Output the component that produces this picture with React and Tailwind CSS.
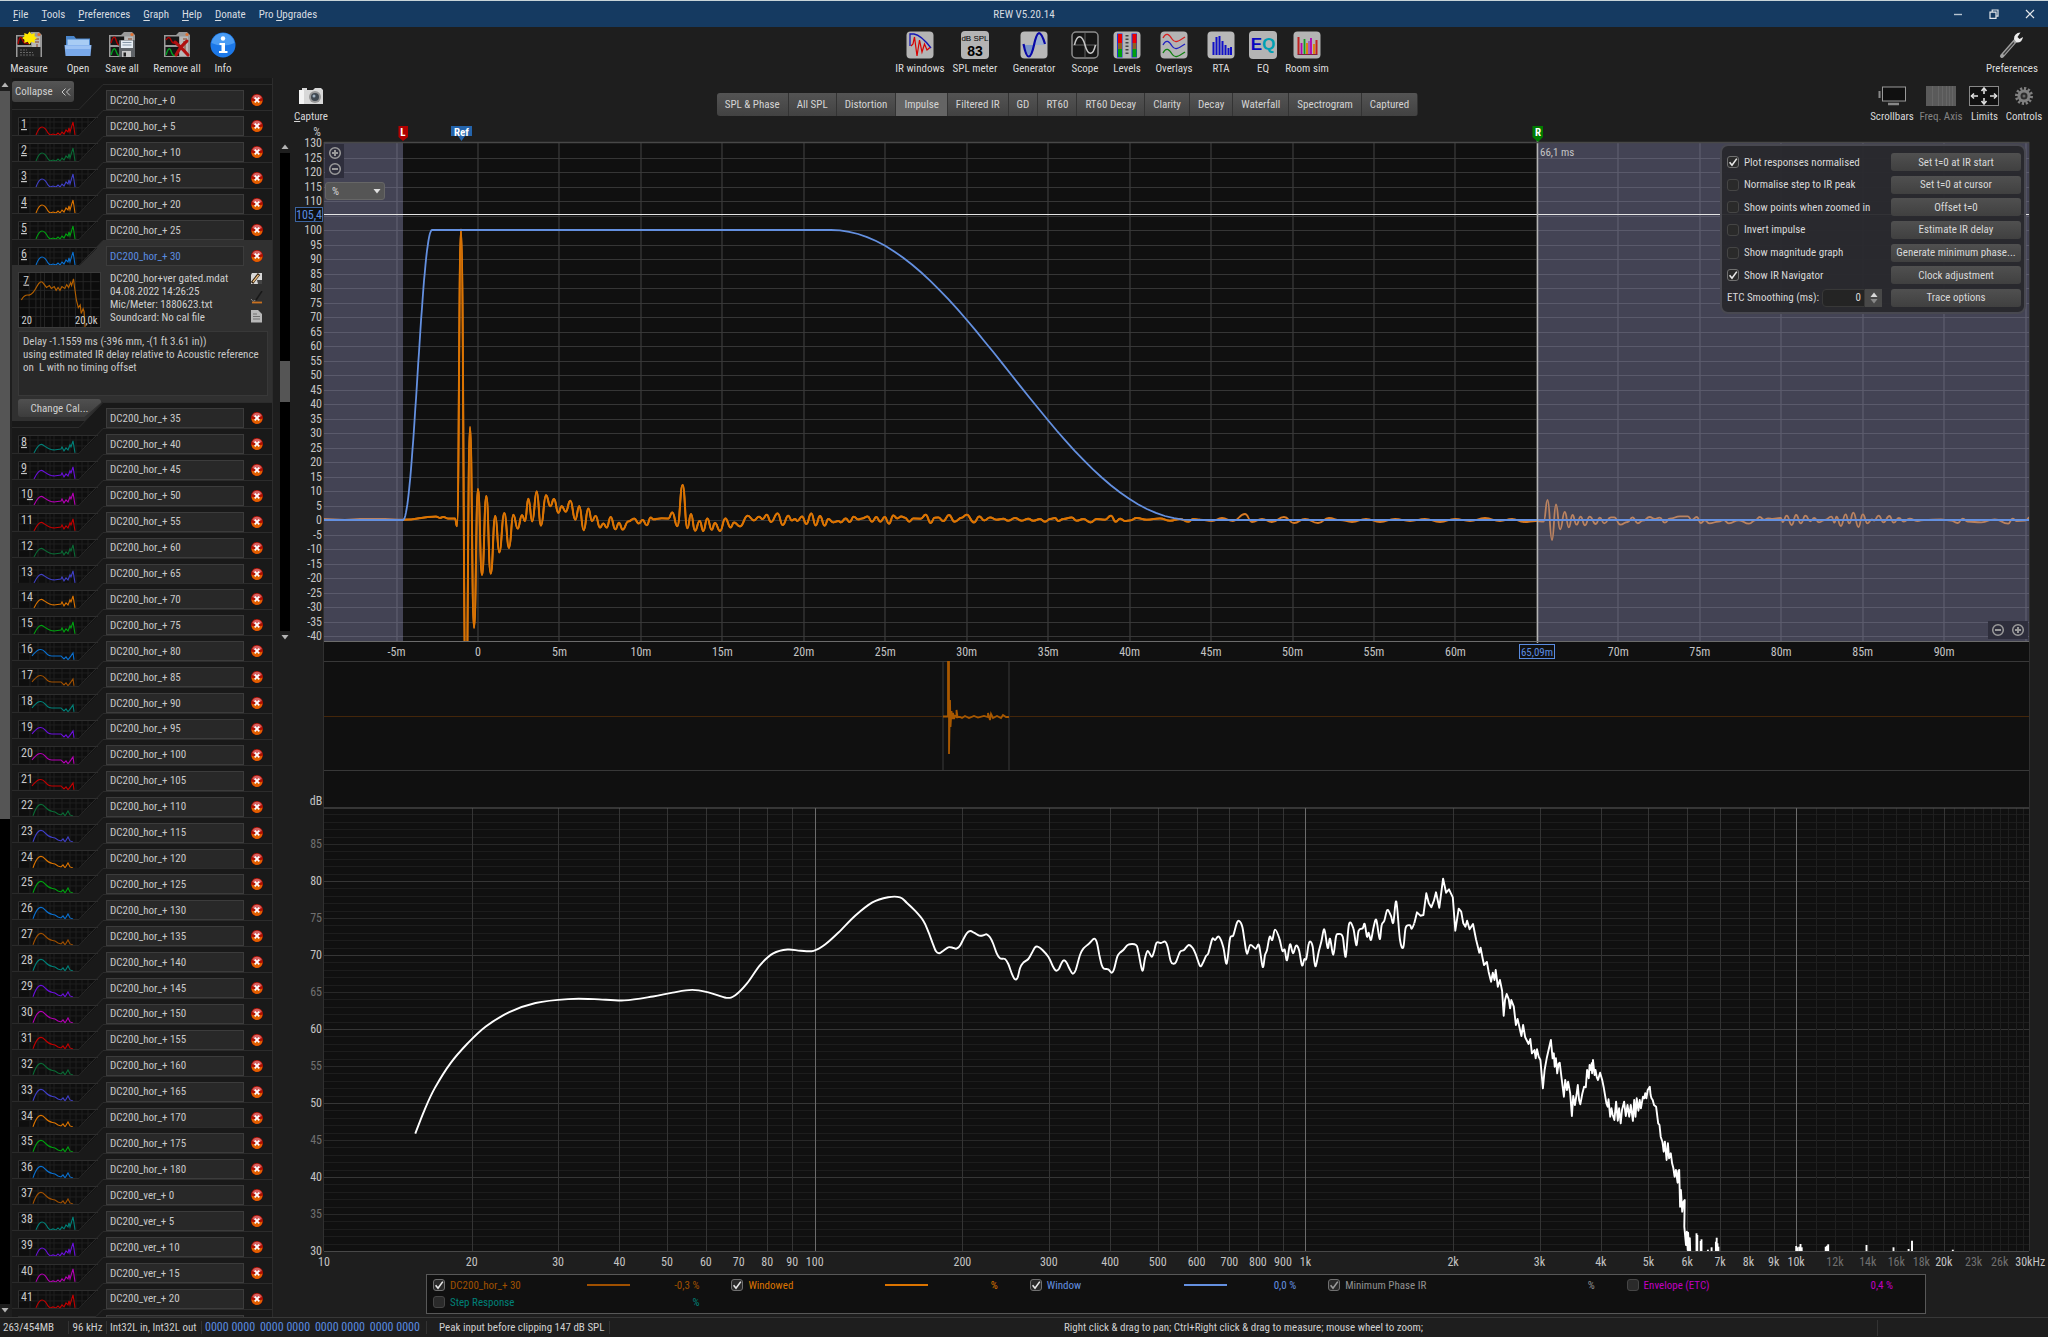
import { useState } from "react";
import clsx from "clsx";

const TRACE_COLORS = [
    "#c40000",
    "#0a6b35",
    "#4040c8",
    "#dc7400",
    "#00a010",
    "#0a70d0",
    "#a05000",
    "#008078",
    "#6a10dc",
    "#b400b4",
];

const horizontal = Array.from({ length: 37 }, (_, i) => `DC200_hor_+ ${i * 5}`);
const vertical = Array.from({ length: 6 }, (_, i) => `DC200_ver_+ ${i * 5}`);
const MEASUREMENTS = [...horizontal, ...vertical];
const SELECTED = 6;

const MENUS = [
    ["", "F", "ile"],
    ["", "T", "ools"],
    ["", "P", "references"],
    ["", "G", "raph"],
    ["", "H", "elp"],
    ["", "D", "onate"],
    ["Pro ", "U", "pgrades"],
];

const GRAPH_TABS = [
    "SPL & Phase",
    "All SPL",
    "Distortion",
    "Impulse",
    "Filtered IR",
    "GD",
    "RT60",
    "RT60 Decay",
    "Clarity",
    "Decay",
    "Waterfall",
    "Spectrogram",
    "Captured",
];

/* ---------- curves ---------- */

// peaks of the impulse response
const IMPULSE_HEAD = [
    [309, 1161], [408, 1152], [420, 1156], [430, 1153], [445, 1158], [465, 1158], [471, 1180], [483, 318],
    [498, 1700], [510, 892], [522, 1475], [534, 1072], [546, 1322], [559, 1092], [572, 1318], [586, 1150],
    [598, 1256], [613, 1142], [627, 1243], [640, 1147], [653, 1187], [666, 1148], [675, 1165], [685, 1100],
    [697, 1166], [710, 1079], [723, 1178], [738, 1090], [751, 1122], [762, 1101], [775, 1141], [785, 1122],
    [797, 1138], [811, 1106], [826, 1161], [838, 1122], [851, 1192], [865, 1129], [876, 1165], [887, 1150],
    [900, 1184], [910, 1172], [920, 1184], [932, 1153], [946, 1189], [957, 1170], [968, 1190], [985, 1166],
    [1003, 1158], [1016, 1172], [1028, 1162], [1040, 1177], [1052, 1155], [1060, 1160], [1085, 1157],
    [1105, 1158], [1117, 1140], [1132, 1180], [1148, 1060], [1162, 1186], [1173, 1145], [1185, 1193],
    [1199, 1165],
].map(([x, y]) => [x / 3 + 300, 520 - (1162 - y) / 2.904]);

const IMPULSE_BODY = [
    [10, 214], [22, 176], [35, 210], [45, 190], [60, 214], [76, 176], [92, 203], [102, 188], [120, 200],
    [143, 168], [162, 182], [177, 171], [188, 178], [200, 165], [213, 187], [233, 161], [248, 196], [265, 168],
    [275, 182], [285, 178], [292, 184], [306, 170], [319, 193], [334, 161], [347, 197], [360, 169], [374, 198],
    [385, 178], [400, 188], [415, 184], [422, 188], [437, 176], [449, 187], [461, 171], [475, 179], [487, 176],
    [503, 170], [516, 186], [529, 172], [541, 186], [554, 172], [567, 192], [580, 167], [592, 176], [604, 170],
    [615, 174], [628, 186], [640, 176], [662, 177], [677, 165], [692, 190], [704, 174], [715, 173], [730, 184],
    [747, 166], [764, 186], [785, 174], [800, 165], [822, 188], [838, 170], [853, 182], [870, 173], [890, 180],
    [910, 177], [925, 183], [945, 175], [965, 183], [985, 177], [1000, 183], [1020, 178], [1035, 186],
    [1050, 178], [1065, 175], [1075, 184], [1090, 178], [1115, 173], [1130, 183], [1150, 178], [1172, 188],
    [1190, 178], [1215, 180], [1233, 168], [1247, 186], [1260, 177], [1275, 184], [1290, 182], [1310, 175],
    [1340, 180], [1380, 176], [1410, 183], [1440, 178], [1465, 186], [1480, 178], [1500, 180],
].map(([x, y]) => [x / 3 + 700, y / 3 + 459.7]);

const IMPULSE_REST = [
    [1212, 521], [1222, 518], [1233, 521], [1245, 514], [1252, 522], [1262, 519], [1272, 522], [1284, 517],
    [1294, 523], [1305, 519], [1318, 523], [1329, 518], [1340, 520], [1352, 522], [1366, 519], [1380, 522],
    [1395, 519], [1410, 521], [1425, 519], [1440, 522], [1455, 519], [1470, 521], [1485, 518], [1500, 521],
    [1512, 519], [1524, 522], [1536, 521],
];

const IMPULSE_TAIL = [
    [70, 125], [82, 60], [95, 180], [107, 73], [119, 148], [133, 96], [145, 142], [156, 105], [168, 134],
    [180, 110], [193, 136], [207, 110], [225, 132], [237, 113], [250, 130], [270, 112], [280, 112], [298, 134],
    [320, 126], [334, 112], [350, 130], [365, 122], [385, 111], [400, 117], [415, 113], [430, 128], [445, 116],
    [475, 109], [498, 109], [510, 120], [525, 111], [537, 129], [549, 121], [562, 130], [590, 125], [605, 120],
    [620, 130], [650, 121], [680, 131], [700, 120], [712, 111], [725, 119], [737, 115], [750, 117], [775, 114],
    [780, 126], [792, 107], [807, 135], [820, 105], [834, 130], [848, 107], [862, 124], [874, 114], [888, 127],
    [905, 120], [925, 110], [934, 128], [940, 110], [953, 138], [967, 103], [978, 130], [990, 98], [1005, 141],
    [1018, 103], [1032, 130], [1045, 118], [1052, 122], [1065, 107], [1080, 127], [1097, 108], [1110, 128],
    [1125, 114], [1140, 125], [1157, 116], [1180, 123], [1200, 120], [1250, 118], [1280, 122], [1300, 129],
    [1315, 116], [1330, 125], [1370, 127], [1410, 118], [1450, 131], [1463, 116], [1475, 123], [1500, 122],
    [1515, 112],
].map(([x, y]) => [x / 2.97 + 1520, y / 3 + 480]);

const LOW_BAND = [
    [318, 868], [325, 850], [333, 833], [345, 814], [358, 799], [372, 786], [390, 775], [410, 768], [435, 765],
    [455, 765], [478, 766], [500, 763], [515, 760], [530, 758], [543, 760], [556, 764], [563, 762], [572, 753],
    [582, 739], [592, 730], [603, 727], [613, 728], [623, 728], [632, 723], [642, 714], [655, 701], [668, 691],
    [680, 687],
].map(([x, y]) => [x * 1.306, y * 1.306]);

const MID_BAND = [
    [0, 112], [20, 128], [45, 152], [70, 182], [85, 215], [98, 250], [108, 274], [118, 280], [130, 272],
    [145, 262], [158, 263], [168, 266], [178, 260], [190, 238], [200, 220], [211, 213], [222, 218], [238, 227],
    [250, 226], [260, 223], [270, 232], [280, 252], [290, 280], [300, 295], [315, 297], [325, 312], [335, 340],
    [345, 358], [353, 352], [360, 325], [370, 308], [385, 297], [395, 280], [405, 262], [413, 260], [425, 268],
    [445, 290], [458, 318], [468, 332], [477, 326], [485, 308], [492, 301], [500, 308], [508, 325], [518, 341],
    [527, 330], [540, 285], [550, 266], [568, 250], [582, 236], [590, 246], [598, 285], [605, 315], [612, 326],
    [625, 328], [635, 338], [642, 328], [652, 290], [660, 278], [670, 270], [685, 254], [708, 255], [715, 275],
    [727, 332], [735, 295], [743, 273], [755, 290], [762, 275], [770, 248], [783, 249], [796, 245], [803, 262],
    [812, 303], [820, 311], [828, 306], [840, 276], [852, 270], [866, 255], [878, 264], [888, 285], [900, 318],
    [908, 310], [918, 288], [925, 280], [937, 237], [945, 240], [957, 230], [970, 262], [980, 311], [990, 236],
    [1000, 226], [1010, 190], [1018, 183], [1027, 200], [1034, 245], [1041, 281], [1051, 255], [1067, 266],
    [1077, 256], [1088, 321], [1095, 285], [1101, 270], [1109, 230], [1117, 240], [1125, 209], [1138, 235],
    [1147, 272], [1154, 269], [1161, 301], [1170, 253], [1179, 280], [1188, 257], [1197, 270], [1206, 316],
    [1213, 298], [1219, 296], [1226, 252], [1232, 245], [1238, 260], [1246, 319], [1256, 275], [1264, 245],
    [1273, 208], [1283, 264], [1290, 236], [1300, 284], [1308, 230], [1315, 222], [1328, 230], [1337, 290],
    [1347, 193], [1360, 205], [1369, 256], [1376, 212], [1388, 205], [1394, 192], [1401, 230], [1406, 218],
    [1413, 240], [1421, 200], [1429, 180], [1439, 237], [1445, 195], [1453, 182], [1462, 150], [1473, 168],
    [1480, 188], [1489, 125], [1500, 240], [1510, 262], [1517, 203], [1530, 196], [1535, 206], [1543, 190],
].map(([x, y]) => [x / 3 + 900, y / 3 + 860]);

const HIGH_BAND = [
    [88, 217], [96, 227], [103, 225], [110, 160], [116, 190], [122, 202], [128, 182], [133, 157], [141, 203],
    [150, 116], [157, 158], [164, 148], [173, 172], [179, 272], [187, 206], [193, 215], [198, 250], [203, 260],
    [207, 242], [213, 268], [221, 252], [228, 298], [236, 338], [239, 323], [243, 350], [247, 375], [254, 366],
    [258, 395], [264, 425], [268, 398], [272, 420], [275, 390], [280, 440], [285, 420], [290, 452], [294, 527],
    [297, 480], [301, 462], [306, 478], [309, 505], [312, 480], [318, 500], [323, 555], [327, 537], [336, 588],
    [340, 555], [345, 592], [353, 612], [357, 597], [361, 640], [367, 630], [370, 655], [373, 628], [377, 650],
    [381, 660], [387, 745], [391, 690], [396, 655], [402, 622], [406, 600], [410, 655], [413, 640], [415, 680],
    [418, 655], [421, 700], [424, 672], [427, 668], [431, 710], [437, 770], [440, 720], [444, 750], [447, 725],
    [452, 760], [456, 828], [459, 768], [463, 795], [467, 765], [470, 735], [473, 780], [476, 793], [481, 760],
    [485, 740], [489, 742], [492, 690], [496, 715], [498, 675], [501, 690], [503, 670], [504, 700], [506, 660],
    [510, 705], [512, 690], [515, 712], [518, 720], [523, 698], [528, 720], [532, 745], [538, 790], [541, 800],
    [543, 778], [547, 830], [550, 805], [553, 825], [557, 840], [561, 785], [565, 842], [568, 805], [572, 850],
    [575, 810], [580, 785], [584, 828], [588, 795], [592, 830], [596, 795], [601, 843], [604, 780], [607, 830],
    [610, 775], [614, 812], [617, 780], [620, 805], [625, 770], [628, 775], [630, 760], [633, 775], [636, 750],
    [641, 740], [643, 765], [645, 775], [648, 780], [651, 795], [656, 800], [661, 850], [664, 855], [667, 890],
    [671, 905], [674, 935], [677, 905], [681, 960], [684, 910], [687, 955], [691, 940], [694, 970], [697, 985],
    [700, 1010], [703, 990], [707, 1028], [709, 992], [711, 990], [713, 1100], [715, 1050], [718, 1115],
    [721, 1085], [724, 1080], [723, 1160], [727, 1215], [729, 1175], [731, 1230], [732, 1178], [734, 1230],
    [736, 1195], [737, 1233],
].map(([x, y]) => [x / 2.376 + 1380, y / 3 + 840]);

// isolated spikes that rise above the 30 dB floor
const FLOOR_SPIKES = [
    [752, 1180], [754, 1185], [762, 1203], [764, 1198], [779, 1229], [788, 1222], [798, 1205], [800, 1193],
    [802, 1210], [804, 1220], [989, 1218], [992, 1222], [996, 1220], [999, 1212], [1002, 1222], [1059, 1220],
    [1062, 1217], [1065, 1213], [1156, 1215], [1220, 1222], [1256, 1227], [1264, 1202], [1361, 1229],
].map(([x, y]) => [x / 2.376 + 1380, y / 3 + 840]);

const r = (n) => Math.round(n * 10) / 10;

const linePath = (pts) => "M" + pts.map(([x, y]) => `${r(x)} ${r(y)}`).join("L");

// every point is a local extreme, so both handles stay horizontal
const peakPath = (pts) =>
    pts.reduce((d, [x, y], i) => {
        if (i === 0) return `M${r(x)} ${r(y)}`;
        const [px, py] = pts[i - 1];
        const mid = r((px + x) / 2);
        return `${d}C${mid} ${r(py)} ${mid} ${r(y)} ${r(x)} ${r(y)}`;
    }, "");

// Catmull-Rom through the points
const smoothPath = (pts) =>
    pts.reduce((d, [x, y], i) => {
        if (i === 0) return `M${r(x)} ${r(y)}`;
        const p0 = pts[i - 2] || pts[i - 1];
        const p1 = pts[i - 1];
        const p3 = pts[i + 1] || pts[i];
        return `${d}C${r(p1[0] + (x - p0[0]) / 6)} ${r(p1[1] + (y - p0[1]) / 6)} ${r(x - (p3[0] - p1[0]) / 6)} ${r(
            y - (p3[1] - p1[1]) / 6
        )} ${r(x)} ${r(y)}`;
    }, "");

const cosineRamp = (x0, y0, x1, y1) =>
    Array.from({ length: 41 }, (_, i) => {
        const k = i / 40;
        return [x0 + (x1 - x0) * k, y0 + ((y1 - y0) * (1 - Math.cos(Math.PI * k))) / 2];
    });

const WINDOW_PATH = linePath([[324, 520], ...cosineRamp(403, 520, 432, 230), ...cosineRamp(831, 230, 1192, 520), [2029, 520]]);
const WINDOWED_PATH = peakPath([...IMPULSE_HEAD, ...IMPULSE_BODY]);
const RAW_PATH = peakPath([[324, 519], [345, 520], [360, 519], [385, 519], ...IMPULSE_HEAD, ...IMPULSE_BODY, ...IMPULSE_REST, ...IMPULSE_TAIL]);

/* ---------- small pieces ---------- */

function RemoveIcon() {
    return (
        <svg viewBox="0 0 14 14" className="h-3.5 w-3.5">
            <circle cx="7" cy="7" r="6" fill="#b01000" />
            <path d="M1.6 7.5A5.4 5.4 0 0 0 12.4 7.5Q7 10 1.6 7.5Z" fill="#e06000" />
            <path d="M2.2 5A5.2 5.2 0 0 1 11.8 5Q7 7.4 2.2 5Z" fill="#d86060" />
            <path d="M4.7 4.7 9.3 9.3M9.3 4.7 4.7 9.3" stroke="#fff" strokeWidth="1.8" />
        </svg>
    );
}

function Triangle({ down, className }) {
    return (
        <svg viewBox="0 0 8 5" className={clsx("h-[5px] w-2", className)}>
            <path d={down ? "M0.5 0H7.5L4 4.5Z" : "M0.5 5H7.5L4 0.5Z"} fill="currentColor" />
        </svg>
    );
}

function CheckBox({ id, checked, onChange, dim }) {
    return (
        <span className="relative h-3 w-3 shrink-0">
            <input
                id={id}
                type="checkbox"
                checked={checked}
                onChange={onChange}
                className="peer block h-3 w-3 appearance-none rounded-[3px] border border-[#454545] bg-[#2a2a2a] checked:border-[#707070]"
            />
            <svg
                viewBox="0 0 12 12"
                className={clsx("pointer-events-none absolute inset-0 hidden h-3 w-3 peer-checked:block", dim ? "opacity-60" : "")}
            >
                <path d="M2.6 6.2 5 9.2 9.8 2.6" fill="none" stroke="#e8e8e8" strokeWidth="1.6" />
            </svg>
        </span>
    );
}

function Scrollbar({ top, thumb, bottom, label }) {
    return (
        <div role="scrollbar" aria-label={label} aria-controls="measurements" aria-valuenow={0} className="flex h-full w-2.5 flex-col items-center text-[#b4b4b4]">
            <Triangle className="my-1 shrink-0" />
            <div className="flex w-full flex-1 flex-col bg-black">
                <div className={top} />
                <div className={clsx("bg-[#555]", thumb)} />
                <div className={bottom} />
            </div>
            <Triangle down className="my-1 shrink-0" />
        </div>
    );
}

/* ---------- header ---------- */

function TitleBar() {
    return (
        <header className="grid h-[27px] shrink-0 grid-cols-3 items-center border-t border-[#c8d4d8] bg-[#153a61] text-[#d8dde2]">
            <nav className="flex gap-[13px] whitespace-nowrap pl-[13px]">
                {MENUS.map(([before, key, after]) => (
                    <a key={after} href="#" className="hover:text-white">
                        {before}
                        <span className="underline underline-offset-2">{key}</span>
                        {after}
                    </a>
                ))}
            </nav>
            <h1 className="text-center">REW V5.20.14</h1>
            <div className="flex items-center justify-end gap-6 pr-3">
                <button type="button" aria-label="Minimise">
                    <svg viewBox="0 0 12 12" className="h-3 w-3">
                        <path d="M2 6.5H10" stroke="#b8c4d0" strokeWidth="1.4" />
                    </svg>
                </button>
                <button type="button" aria-label="Restore">
                    <svg viewBox="0 0 12 12" className="h-3 w-3" fill="none" stroke="#e4e8ec" strokeWidth="1.2">
                        <path d="M2 4.2H8V10.4H2Z" />
                        <path d="M4.2 4V2H10V8.2H8.2" />
                    </svg>
                </button>
                <button type="button" aria-label="Close">
                    <svg viewBox="0 0 12 12" className="h-3 w-3">
                        <path d="M2 2 10 10M10 2 2 10" stroke="#e4e8ec" strokeWidth="1.2" />
                    </svg>
                </button>
            </div>
        </header>
    );
}

function Device() {
    return (
        <g>
            <path d="M1 4V26H27V4L24 1H16L13 4Z" fill="#9a9a9a" />
            <path d="M2.5 5.5H16V14H2.5Z" fill="#161616" />
            <path d="M17 5.5H25V25H17Z" fill="#b8b8b8" />
            <circle cx="24" cy="3.5" r="1.6" fill="#e07030" />
            <path d="M20 8H24M20 11H24M22 13V22" stroke="#884020" strokeWidth="1" />
        </g>
    );
}

const TOOL_ICONS = {
    measure: (
        <>
            <Device />
            <path d="M3 13Q5 3 7 8T11 12L14 13" fill="none" stroke="#b00000" strokeWidth="1.3" />
            <path d="M2.5 16H25.5V26H2.5Z" fill="#222" />
            <path d="M5 19H12M5 21.5H18M5 24H20" stroke="#777" strokeWidth=".8" strokeDasharray="2 1" />
            <path
                d="M14.5 .5 16.4 3.2 19.7 2 19.6 5.3 22 7 19.6 8.7 19.7 12 16.4 10.8 14.5 13.5 12.6 10.8 9.3 12 9.4 8.7 7 7 9.4 5.3 9.3 2 12.6 3.2Z"
                fill="#ffe800"
            />
        </>
    ),
    open: (
        <>
            <path d="M2 5H10L12 7.5H26V16H2Z" fill="#4a86cc" />
            <path d="M3.5 8.5H25V14H3.5Z" fill="#a8ccf4" />
            <path d="M.5 14H27.5L26.5 25H1.5Z" fill="#79a9ea" />
            <path d="M1 14.5H27L26.6 18H1.4Z" fill="#9cc2f4" />
        </>
    ),
    save: (
        <>
            <Device />
            <path d="M2.5 16H16V25H2.5Z" fill="#161616" />
            <path d="M3 12Q6 2 8 9T12 13" fill="none" stroke="#b00000" strokeWidth="1.4" />
            <path d="M3 24Q6 14 8 20T12 24" fill="none" stroke="#00a020" strokeWidth="1.4" />
            <rect x="11" y="9" width="16" height="17" rx="1" fill="#606468" />
            <path d="M13 9.5H25V17H13Z" fill="#e8eef4" />
            <path d="M14.5 11.5H23.5M14.5 14H23.5" stroke="#8898a8" />
            <path d="M14 20H23V26H14Z" fill="#c8c8c8" />
            <path d="M15.5 21.5H18V25.5H15.5Z" fill="#222" />
        </>
    ),
    remove: (
        <>
            <Device />
            <path d="M2.5 16H16V25H2.5Z" fill="#161616" />
            <path d="M3 9Q6 4 8 9T14 11" fill="none" stroke="#b00000" strokeWidth="1.4" />
            <path d="M3 24Q6 14 8 20T12 24" fill="none" stroke="#00a020" strokeWidth="1.4" />
            <path d="M12 11Q18 16 25 24M24 10Q17 16 13 24" fill="none" stroke="#b01010" strokeWidth="3" strokeLinecap="round" />
        </>
    ),
    info: (
        <>
            <circle cx="14" cy="14" r="12.5" fill="#1c78e8" />
            <path d="M2.5 12A11.6 11.6 0 0 1 25.5 12Q14 17 2.5 12Z" fill="#4a9cf4" />
            <circle cx="14" cy="7.5" r="2.2" fill="#fff" />
            <path d="M10.5 12H16V20H18.5V22H10V20H12.5V14H10.5Z" fill="#fff" />
        </>
    ),
    irWindows: (
        <>
            <rect x=".5" y=".5" width="27" height="27" rx="4" fill="#b4b4b4" />
            <path d="M4 15V3H8Q15 4 25 17" fill="none" stroke="#1414b4" strokeWidth="1.3" />
            <path d="M5 15 7 13 8.5 6 11 25 13.5 9 16 21 18.5 13 21 19 24 16.5" fill="none" stroke="#d80000" strokeWidth="1.2" />
        </>
    ),
    generator: (
        <>
            <rect x=".5" y=".5" width="27" height="27" rx="4" fill="#b8b8b8" />
            <path d="M4 14Q10 34 14 14Z" fill="#7a94c8" />
            <path d="M14 14Q18-6 24 14Z" fill="#9aaed0" />
            <path d="M3.5 13C7 31 11 28 14 14S20-3 25 13" fill="none" stroke="#0808a8" strokeWidth="2.2" />
        </>
    ),
    scope: (
        <>
            <rect x="1" y="1" width="26" height="26" rx="4" fill="#161616" stroke="#8c8c8c" strokeWidth="1.5" />
            <path d="M2 14H26M14 2V26" stroke="#606060" />
            <path d="M3.5 14C6 3 11 3 14 14S22 25 24.5 14" fill="none" stroke="#c8c8c8" strokeWidth="1.5" />
        </>
    ),
    levels: (
        <>
            <rect x=".5" y=".5" width="27" height="27" rx="4" fill="#b4b4b4" />
            {[4, 18.5].map((x) => (
                <g key={x}>
                    <rect x={x} y="2.5" width="5.5" height="24" fill="#2030d0" />
                    <rect x={x + 1} y="3" width="4" height="9" fill="#f00000" />
                    <rect x={x + 1} y="12" width="4" height="7" fill="#906020" />
                    <rect x={x + 1} y="18" width="4" height="8" fill="#00a010" />
                </g>
            ))}
            <path d="M14 4V25" stroke="#444" strokeWidth="3" strokeDasharray="1.5 2" />
        </>
    ),
    overlays: (
        <>
            <rect x=".5" y=".5" width="27" height="27" rx="4" fill="#b4b4b4" />
            <path d="M3 7C6 1 9 3 12 8S19 10 25 6" fill="none" stroke="#d82020" strokeWidth="1.3" />
            <path d="M3 14C6 8 9 10 12 15S19 17 25 13" fill="none" stroke="#2020c0" strokeWidth="1.3" />
            <path d="M3 22C6 16 9 18 12 23S19 25 25 21" fill="none" stroke="#108010" strokeWidth="1.3" />
        </>
    ),
    rta: (
        <>
            <rect x=".5" y=".5" width="27" height="27" rx="4" fill="#b8b8b8" />
            <path
                d="M6.5 24V11M9.5 24V6M12.5 24V5M15.5 24V10M18.5 24V14M21.5 24V17M24 24V16"
                stroke="#1010c8"
                strokeWidth="2"
            />
        </>
    ),
    roomSim: (
        <>
            <rect x=".5" y=".5" width="27" height="27" rx="4" fill="#b4b4b4" />
            <path d="M5.5 6V23M23.5 9V23" stroke="#c02020" strokeWidth="2" />
            <path d="M8.5 12V23M18 7V23" stroke="#b000b0" strokeWidth="1.8" />
            <path d="M11.5 8V23" stroke="#10a020" strokeWidth="1.8" />
            <path d="M14 12V23M21 13V23" stroke="#e08000" strokeWidth="1.8" />
            <path d="M16 10V23" stroke="#a040c0" strokeWidth="1.5" />
            <path d="M4.5 23.5H24.5" stroke="#802040" />
        </>
    ),
    wrench: (
        <>
            <path d="M4 25 18 9" stroke="#a0a0a0" strokeWidth="4" strokeLinecap="round" />
            <path d="M5.5 23.5 16 11.5" stroke="#383838" strokeWidth="1.3" />
            <path d="M22.5 1.5Q16 2 16 8L18.5 11.5Q24 12 25 6L21.5 8 19.5 6Z" fill="#ececec" />
        </>
    ),
};

function ToolButton({ icon, label, width, children }) {
    return (
        <button type="button" className={clsx("flex flex-col items-center gap-0.5 whitespace-nowrap text-[#dcdcdc]", width)}>
            {children || (
                <svg viewBox="0 0 28 28" className="h-7 w-7">
                    {TOOL_ICONS[icon]}
                </svg>
            )}
            <span className="leading-4">{label}</span>
        </button>
    );
}

function Toolbar() {
    return (
        <div className="flex h-[51px] shrink-0 items-start justify-between pr-2.5 pt-1">
            <div className="flex">
                <ToolButton icon="measure" label="Measure" width="w-[58px]" />
                <ToolButton icon="open" label="Open" width="w-10" />
                <ToolButton icon="save" label="Save all" width="w-12" />
                <ToolButton icon="remove" label="Remove all" width="w-[62px]" />
                <ToolButton icon="info" label="Info" width="w-[30px]" />
            </div>
            <div className="flex">
                <ToolButton icon="irWindows" label="IR windows" width="w-[58px]" />
                <ToolButton label="SPL meter" width="w-[52px]">
                    <span className="flex h-7 w-7 flex-col items-center rounded bg-[#b4b4b4] pt-1 font-['Liberation_Sans'] text-black">
                        <span className="text-[8px] leading-[8px]">dB SPL</span>
                        <span className="text-[14px] font-bold leading-4">83</span>
                    </span>
                </ToolButton>
                <ToolButton icon="generator" label="Generator" width="w-[66px]" />
                <ToolButton icon="scope" label="Scope" width="w-9" />
                <ToolButton icon="levels" label="Levels" width="w-12" />
                <ToolButton icon="overlays" label="Overlays" width="w-[46px]" />
                <ToolButton icon="rta" label="RTA" width="w-12" />
                <ToolButton label="EQ" width="w-9">
                    <span className="flex h-7 w-7 items-center justify-center rounded bg-[#b4b4b4] font-['Liberation_Sans'] text-[17px] font-bold leading-5">
                        <span className="text-[#0808c0]">E</span>
                        <span className="text-[#00a0b4]">Q</span>
                    </span>
                </ToolButton>
                <ToolButton icon="roomSim" label="Room sim" width="w-[52px]" />
            </div>
            <ToolButton icon="wrench" label="Preferences" width="w-[52px]" />
        </div>
    );
}

/* ---------- measurement list ---------- */

const thumbCurve = (index) => {
    if (index < 7 || index > 37) {
        return "M24 25Q27 17 30 17T36 23L38 25 41 24 44 25 46 23 48 25 50 22 52 24 54 20 56 22 57 18 58 22 61 12 62 18 63 25";
    }
    if (index < 16) {
        return "M22 25C25 19 28 15 31 17S37 22 42 22L49 21 50 19 52 23 54 20 56 22 58 17 59 19 61 13 63 25";
    }
    if (index < 22) {
        return "M20 21C25 15 29 12 33 17S39 21 42 21L49 21 52 24 54 22 56 25 59 21 61 18 62 25";
    }
    return "M21 25C25 13 29 11 33 16S39 20 43 21L46 23 49 24 51 22 53 25 56 20 58 24 61 25";
};

// left part of a row: trace thumbnail of the measurement above, cut by the slanted tab edge
function RowEdge({ index, hasThumb, active }) {
    const color = TRACE_COLORS[(index - 1) % 10];
    return (
        <svg viewBox="0 0 94 26" preserveAspectRatio="none" className="block h-full w-[94px] shrink-0">
            {active && <path d="M0 26 67 26 91 .5H94V26Z" fill="#303030" />}
            {hasThumb && (
                <>
                    <path d="M6 7H86L68 25H6Z" fill="#0e0e0e" />
                    <path
                        d="M18 8V25M26 8V25M34 8V25M38 8V25M42 8V25M50 8V25M58 8V25M64 8V25M70 8V22M76 8V16M7 12H80M7 18H74"
                        stroke="#1f1f1f"
                    />
                    <path d="M6.5 25V7.5H86" fill="none" stroke="#303030" />
                    <path d={thumbCurve(index)} fill="none" stroke={color} strokeWidth="1.1" />
                    <text x="9" y="18" fontSize="12" fill="#c8c8c8">
                        {index === 10 ? (
                            <>
                                1<tspan textDecoration="underline">0</tspan>
                            </>
                        ) : (
                            <tspan textDecoration={index < 10 ? "underline" : "none"}>{index}</tspan>
                        )}
                    </text>
                </>
            )}
            <path d="M0 25.5H67L91 .5H94" fill="none" stroke={active ? "#303030" : "#2c2c2c"} />
        </svg>
    );
}

function MeasurementRow({ name, index, active, className, edge }) {
    return (
        <div className={clsx("flex min-h-0", className)}>
            {edge || <RowEdge index={index} hasThumb={index > 0} active={active} />}
            <div className={clsx("flex min-w-0 flex-1 items-start border-t pt-[5px]", active ? "border-[#303030] bg-[#303030]" : "border-[#2c2c2c]")}>
                <input
                    aria-label={`Measurement ${index + 1} name`}
                    defaultValue={name}
                    className={clsx(
                        "h-5 w-[138px] border border-[#3c3c3c] bg-[#282828] px-[3px] text-[11px]",
                        active ? "text-[#5a8ce0]" : "text-[#c8c8c8]"
                    )}
                />
                <button type="button" aria-label={`Remove ${name}`} className="ml-1.5 mt-[3px]">
                    <RemoveIcon />
                </button>
            </div>
        </div>
    );
}

function SelectedDetails() {
    return (
        <div className="flex h-[136px] shrink-0 flex-col bg-[#303030] pl-1.5 pt-1.5">
            <div className="flex">
                <svg viewBox="0 0 83 56" className="h-14 w-[83px] shrink-0 border border-[#3c3c3c] bg-[#0c0c0c]">
                    <path
                        d="M10 0V56M17 0V56M22 0V56M26 0V56M34 0V56M42 0V56M47 0V56M51 0V56M58 0V56M66 0V56M74 0V56M0 9H83M0 18H83M0 27H83M0 36H83M0 45H83"
                        stroke="#262626"
                    />
                    <path
                        d="M2 28Q5 22 10 23Q14 22 18 14Q22 6 25 11L28 15 31 13 33 16 36 14 38 18 40 15 42 18 44 14 47 16 49 12 51 15 53 10 54 13 56 6 57 14 59 28 61 36 63 33 64 42 66 37 67 40 68 56"
                        fill="none"
                        stroke="#b46000"
                        strokeWidth="1.2"
                    />
                    <text x="4" y="11" fontSize="12" fill="#d0d0d0" textDecoration="underline">7</text>
                    <text x="2" y="53" fontSize="11" fill="#d0d0d0">20</text>
                    <text x="81" y="53" fontSize="11" fill="#d0d0d0" textAnchor="end">20,0k</text>
                </svg>
                <div className="flex-1 whitespace-nowrap pl-[9px] leading-[13px] text-[#cfcfcf]">
                    <p>DC200_hor+ver gated.mdat</p>
                    <p>04.08.2022 14:26:25</p>
                    <p>Mic/Meter: 1880623.txt</p>
                    <p>Soundcard: No cal file</p>
                </div>
                <div className="flex w-[22px] flex-col gap-1.5">
                    <svg viewBox="0 0 13 13" className="h-[13px] w-[13px]">
                        <path d="M2 1H12V12H1V3Z" fill="#d8d8d8" />
                        <path d="M7 8H12V12H8Z" fill="#444" />
                        <path d="M2 11 9 2" stroke="#302010" strokeWidth="3" />
                        <path d="M3 10 8.5 3" stroke="#f0c080" strokeWidth="1.3" />
                    </svg>
                    <svg viewBox="0 0 13 13" className="h-[13px] w-[13px]">
                        <path d="M12 0 6 9" stroke="#181818" strokeWidth="1.5" />
                        <path d="M1 8Q4 12 5 9" stroke="#888" fill="none" />
                        <path d="M2 11.5H12" stroke="#c87020" strokeWidth="1.8" />
                    </svg>
                    <svg viewBox="0 0 13 13" className="h-[13px] w-[13px]">
                        <path d="M1 0H8L12 4V12.5H1Z" fill="#b8b8b8" />
                        <path d="M3 4H7M3 6.5H10M3 9H10" stroke="#707070" />
                    </svg>
                </div>
            </div>
            <textarea
                aria-label="Notes"
                readOnly
                className="mt-[3px] h-[65px] w-[250px] resize-none overflow-hidden border border-[#383838] bg-[#282828] px-1 py-[3px] text-[#c8c8c8]"
                value={"Delay -1.1559 ms (-396 mm, -(1 ft 3.61 in))\nusing estimated IR delay relative to Acoustic reference\non  L with no timing offset"}
            />
        </div>
    );
}

function MeasurementList() {
    const upper = MEASUREMENTS.slice(1, SELECTED + 1);
    const lower = MEASUREMENTS.slice(SELECTED + 2, -1);

    return (
        <div id="measurements" className="flex w-[261px] shrink-0 flex-col overflow-hidden border-r border-[#2c2c2c] bg-[#191919] pt-[3px]">
            <MeasurementRow
                name={MEASUREMENTS[0]}
                index={0}
                className="mt-[3px] h-[26px] shrink-0"
                edge={
                    <div className="relative h-[26px] w-[94px] shrink-0">
                        <RowEdge index={0} />
                        <button
                            type="button"
                            className="absolute -top-[3px] left-0 flex h-[21px] w-[62px] items-center gap-2 rounded-[3px] bg-linear-to-b from-[#555] to-[#404040] pl-[3px] text-[#d0d0d0]"
                        >
                            Collapse
                            <svg viewBox="0 0 10 8" className="h-2 w-2.5" fill="none" stroke="#c8c8c8">
                                <path d="M4.5 .5 1 4 4.5 7.5M9 .5 5.5 4 9 7.5" />
                            </svg>
                        </button>
                    </div>
                }
            />
            {upper.map((name, i) => (
                <MeasurementRow key={name} name={name} index={i + 1} active={i + 1 === SELECTED} className="h-[26px] shrink-0" />
            ))}
            <SelectedDetails />
            <MeasurementRow
                name={MEASUREMENTS[SELECTED + 1]}
                index={SELECTED + 1}
                className="h-[26px] shrink-0"
                edge={
                    <div className="relative h-[26px] w-[94px] shrink-0">
                        <svg viewBox="0 0 94 26" className="block h-[26px] w-[94px]">
                            <path d="M0 0H91L73 19H0Z" fill="#303030" />
                            <path d="M0 25.5H67L91 .5H94" fill="none" stroke="#2c2c2c" />
                        </svg>
                        <button
                            type="button"
                            className="absolute left-1.5 -top-[3px] h-[18px] w-[83px] rounded-[3px] bg-linear-to-b from-[#505050] to-[#3c3c3c] text-[#d0d0d0] [clip-path:polygon(0_0,100%_0,100%_20%,80%_100%,0_100%)]"
                        >
                            Change Cal...
                        </button>
                    </div>
                }
            />
            <div className="flex min-h-0 flex-1 flex-col">
                {lower.map((name, i) => (
                    <MeasurementRow key={name} name={name} index={SELECTED + 2 + i} className="flex-1 basis-0" />
                ))}
            </div>
            <MeasurementRow
                name={MEASUREMENTS[MEASUREMENTS.length - 1]}
                index={42}
                className="h-2 shrink-0 overflow-hidden"
                edge={
                    <svg viewBox="0 0 94 8" className="block h-2 w-[94px] shrink-0">
                        <path d="M6 7.5H84L91 .5H94" fill="none" stroke="#2c2c2c" />
                    </svg>
                }
            />
        </div>
    );
}

/* ---------- graphs ---------- */

const msToX = (ms) => 478 + ms * 16.29;
const pctToY = (pct) => 520 - pct * 2.9;
const hzToX = (hz) => 324 + Math.log10(hz / 10) * 490.7;
const dbToY = (db) => 1251 - (db - 30) * 7.4;

function ZoomGlyph({ plus }) {
    return (
        <svg viewBox="0 0 14 14" className="h-3.5 w-3.5" fill="none" stroke="#9a9a9a" strokeWidth="1.5">
            <circle cx="7" cy="7" r="5.3" />
            <path d={plus ? "M4 7H10M7 4V10" : "M4 7H10"} strokeWidth="2" />
        </svg>
    );
}

function ImpulsePlot() {
    const pctTicks = Array.from({ length: 35 }, (_, i) => 130 - i * 5);
    const msTicks = Array.from({ length: 21 }, (_, i) => i * 5 - 5);

    return (
        <svg viewBox="290 124 1758 648" className="block h-auto w-full" fontSize="12" fill="#c4c4c4" role="img" aria-label="Impulse response">
            <defs>
                <clipPath id="plot">
                    <rect x="324" y="143" width="1705" height="498" />
                </clipPath>
            </defs>
            <rect x="324" y="142" width="1706" height="630" fill="#101010" />
            <g stroke="#363636">
                {pctTicks.slice(1).map((p) => (
                    <path key={p} d={`M324 ${Math.round(pctToY(p)) + 0.5}H2029`} />
                ))}
                {msTicks.map((ms) => (
                    <path key={ms} d={`M${Math.round(msToX(ms))} 143V641`} strokeWidth="1.2" stroke="#3c3c3c" />
                ))}
            </g>
            <g clipPath="url(#plot)" fill="none" strokeLinejoin="round">
                <path d={RAW_PATH} stroke="#d87a24" strokeWidth="1.8" />
                <path d={WINDOWED_PATH} stroke="#dc7400" strokeWidth="2" />
            </g>
            <g fill="#9090bb" fillOpacity=".4">
                <rect x="324" y="143" width="79" height="498" />
                <rect x="1538" y="143" width="491" height="498" />
            </g>
            <path d={WINDOW_PATH} fill="none" stroke="#6490e0" strokeWidth="1.8" />
            <path d="M323 214.5H2029" stroke="#e4e4e4" />
            <path d="M1537.5 140V643" stroke="#b4b4b4" strokeWidth="1.5" />
            <path d="M324 142.5H2029" stroke="#484848" strokeWidth="1.5" />
            <path d="M323.5 142V772M2029.5 142V772" stroke="#303030" />
            <path d="M324 641.5H2029" stroke="#6c6c6c" />
            <path d="M324 661.5H2029M324 770.5H2029" stroke="#383838" />

            {pctTicks.map((p) =>
                p === 105 ? null : (
                    <text key={p} x="322" y={pctToY(p) + 4} textAnchor="end">
                        {p}
                    </text>
                )
            )}
            <text x="317" y="136" textAnchor="middle">%</text>
            <rect x="295.5" y="207.5" width="27" height="14" fill="#101010" stroke="#3c64a0" />
            <text x="309" y="219" textAnchor="middle" fill="#5a8ce0">105,4</text>

            {msTicks
                .filter((ms) => ms !== 65 && ms <= 90)
                .map((ms) => (
                    <text key={ms} x={msToX(ms)} y="656" textAnchor="middle">
                        {ms === 0 ? "0" : `${ms}m`}
                    </text>
                ))}
            <rect x="1519.5" y="644.5" width="35" height="14" fill="#101010" stroke="#5a8ce0" />
            <text x="1537" y="656" textAnchor="middle" fontSize="11" fill="#5a8ce0">65,09m</text>
            <text x="1540" y="156" fontSize="11">66,1 ms</text>

            <g fontWeight="700" fontSize="11" fill="#fff" textAnchor="middle">
                <path d="M398.5 126H408V137L403 141 398.5 137Z" fill="#b00000" />
                <text x="403" y="136">L</text>
                <path d="M451 126H472V136H465L461.5 141 458 136H451Z" fill="#2464ac" />
                <text x="461.5" y="136">Ref</text>
                <path d="M1532.5 126H1543V137L1538 142 1532.5 137Z" fill="#007c00" />
                <text x="1538" y="136">R</text>
            </g>

            <path d="M324 716.5H2029" stroke="#44260a" />
            <path d="M943 662V770M1009 662V770" stroke="#2c2c2c" strokeWidth="1.5" />
            <path
                d="M943 716.5H948V662H949V754L950 700 950.5 727 951.5 711 952 719 953 713 954 719 955 716 956.5 717V710L957.5 717H960L962 718 965 716 969 718 974 716 978 717.5 984 716 988 717V713L990 720 991 714 993 718 997 716 1001 718 1003 715 1006 717H1009"
                fill="none"
                stroke="#a85800"
                strokeWidth="1.8"
            />
        </svg>
    );
}

const FREQ_LABELS = [
    [10], [20], [30], [40], [50], [60], [70], [80], [90], [100], [200], [300], [400], [500], [600], [700], [800],
    [900], [1000, "1k"], [2000, "2k"], [3000, "3k"], [4000, "4k"], [5000, "5k"], [6000, "6k"], [7000, "7k"],
    [8000, "8k"], [9000, "9k"], [10000, "10k"], [12000, "12k"], [14000, "14k"], [16000, "16k"], [18000, "18k"],
    [20000, "20k"], [23000, "23k"], [26000, "26k"], [30000, "30kHz"],
];
const DIM_FREQS = [12000, 14000, 16000, 18000, 23000, 26000];

function MagnitudePlot() {
    const dbLines = Array.from({ length: 59 }, (_, i) => 31 + i);
    const freqs = [];
    [10, 100, 1000].forEach((decade) => {
        for (let k = 2; k <= 10; k += 1) freqs.push(decade * k);
    });
    const highFreqs = Array.from({ length: 19 }, (_, i) => 11000 + i * 1000);

    return (
        <svg viewBox="290 772 1758 499" className="block h-auto w-full" fontSize="12" fill="#c4c4c4" role="img" aria-label="Frequency response">
            <rect x="324" y="772" width="1706" height="479" fill="#101010" />
            {dbLines.map((db) => (
                <path
                    key={db}
                    d={`M324 ${Math.round(dbToY(db)) + 0.5}H2029`}
                    stroke={db % 10 === 0 ? "#363636" : db % 5 === 0 ? "#282828" : "#1d1d1d"}
                />
            ))}
            {highFreqs.map((hz) => (
                <path key={hz} d={`M${Math.round(hzToX(hz)) + 0.5} 808V1251`} stroke={hz === 20000 ? "#343434" : "#1f1f1f"} />
            ))}
            {freqs.map((hz) => (
                <path
                    key={hz}
                    d={`M${Math.round(hzToX(hz)) + 0.5} 808V1251`}
                    stroke={[100, 1000, 10000].includes(hz) ? "#6c6c6c" : "#343434"}
                />
            ))}
            <path d="M324 808H2029" stroke="#5c5c5c" />
            <path d="M323.5 772V1251M2029.5 772V1251" stroke="#303030" />
            <path d="M324 1251.5H2029" stroke="#484848" />
            <g fill="none" stroke="#fff" strokeWidth="1.9" strokeLinejoin="round">
                <path d={smoothPath([...LOW_BAND, ...MID_BAND])} />
                <path d={linePath([MID_BAND[MID_BAND.length - 1], ...HIGH_BAND])} />
                {FLOOR_SPIKES.map(([x, y]) => (
                    <path key={x} d={`M${r(x)} ${r(y)}V1251`} />
                ))}
            </g>
            <text x="316" y="805" textAnchor="middle">dB</text>
            {[85, 80, 75, 70, 65, 60, 55, 50, 45, 40, 35, 30].map((db) => (
                <text key={db} x="322" y={dbToY(db) + 4} textAnchor="end" fill={db % 10 ? "#707070" : "#c4c4c4"}>
                    {db}
                </text>
            ))}
            {FREQ_LABELS.map(([hz, label]) => (
                <text key={hz} x={hzToX(hz)} y="1266" textAnchor="middle" fill={DIM_FREQS.includes(hz) ? "#707070" : "#c4c4c4"}>
                    {label || hz}
                </text>
            ))}
        </svg>
    );
}

const OPTIONS = [
    ["Plot responses normalised", "Set t=0 at IR start", true],
    ["Normalise step to IR peak", "Set t=0 at cursor", false],
    ["Show points when zoomed in", "Offset t=0", false],
    ["Invert impulse", "Estimate IR delay", false],
    ["Show magnitude graph", "Generate minimum phase...", false],
    ["Show IR Navigator", "Clock adjustment", true],
];

function OptionButton({ children }) {
    return (
        <button type="button" className="h-[18px] w-[130px] whitespace-nowrap rounded-[3px] bg-linear-to-b from-[#505050] to-[#404040] text-[#d8d8d8]">
            {children}
        </button>
    );
}

function OptionsPanel() {
    const [checked, setChecked] = useState(OPTIONS.map((o) => o[2]));
    const toggle = (i) => setChecked(checked.map((c, j) => (i === j ? !c : c)));

    return (
        <div className="absolute right-[22px] top-5 flex h-[170px] w-[306px] flex-col justify-between whitespace-nowrap rounded-lg border-2 border-[#484850] bg-[#28282c]/95 pb-[5px] pl-[5px] pr-[3px] pt-[7px] text-[#d8d8d8]">
            {OPTIONS.map(([label, action], i) => (
                <div key={label} className="flex items-center justify-between">
                    <label htmlFor={`opt-${i}`} className="flex items-center gap-[5px]">
                        <CheckBox id={`opt-${i}`} checked={checked[i]} onChange={() => toggle(i)} />
                        {label}
                    </label>
                    <OptionButton>{action}</OptionButton>
                </div>
            ))}
            <div className="flex items-center">
                <label htmlFor="etc">ETC Smoothing (ms):</label>
                <input
                    id="etc"
                    defaultValue="0"
                    className="ml-auto h-[18px] w-[43px] rounded-l border border-[#383838] bg-[#242424] px-[3px] text-right"
                />
                <button type="button" aria-label="Step" className="mr-[9px] flex h-[18px] w-[17px] flex-col items-center justify-center gap-0.5 bg-[#484848]">
                    <Triangle />
                    <Triangle down className="text-[#888]" />
                </button>
                <OptionButton>Trace options</OptionButton>
            </div>
        </div>
    );
}

const VIEW_ICONS = [
    [
        "Scrollbars",
        "w-[50px]",
        <>
            <path d="M2.5 5V12" stroke="#888" strokeWidth="2" />
            <rect x="5.5" y="1" width="23" height="14" fill="#101010" stroke="#999" />
            <path d="M11 18H22" stroke="#888" strokeWidth="2.5" />
        </>,
    ],
    [
        "Freq. Axis",
        "w-12",
        <>
            <rect x="0" y="0" width="30" height="20" fill="#5a5a5a" />
            <path d="M6.5 0V20M12.5 0V20M16.5 0V20M20.5 0V20M23.5 0V20M26.5 0V20" stroke="#666" />
        </>,
    ],
    [
        "Limits",
        "w-[39px]",
        <>
            <rect x=".5" y=".5" width="29" height="19" fill="#101010" stroke="#888" />
            <path d="M15 8V2.5M15 12V17.5M9 10H2.5M21 10H27.5" stroke="#e0e0e0" strokeWidth="1.6" />
            <path d="M12.5 5 15 2 17.5 5M12.5 15 15 18 17.5 15M5 7.5 2.5 10 5 12.5M25 7.5 27.5 10 25 12.5" fill="none" stroke="#e0e0e0" strokeWidth="1.6" />
        </>,
    ],
    [
        "Controls",
        "w-10",
        <>
            <circle cx="15" cy="10" r="7.5" fill="none" stroke="#808080" strokeWidth="3" strokeDasharray="2.2 1.7" />
            <circle cx="15" cy="10" r="6.5" fill="#808080" />
            <circle cx="15" cy="10" r="3.5" fill="#2c2c2c" />
            <circle cx="15" cy="10" r="1.5" fill="#666" />
        </>,
    ],
];

function GraphHeader() {
    const [tab, setTab] = useState("Impulse");

    return (
        <div className="flex h-[46px] items-start justify-between pl-px pr-1">
            <button type="button" className="flex w-10 flex-col items-center gap-[3px] pt-2 text-[#d8d8d8]">
                <svg viewBox="0 0 26 20" className="h-5 w-[26px]">
                    <path d="M1 4H4V2H9V4H15L17 2H23L25 4V18H1Z" fill="#d8d8d8" />
                    <path d="M1 4H6V18H1Z" fill="#f4f4f4" />
                    <circle cx="17" cy="11" r="6" fill="#989898" />
                    <circle cx="17" cy="11" r="4" fill="#404850" />
                    <circle cx="16" cy="10" r="1.5" fill="#a0b0c0" />
                </svg>
                <span className="leading-4">
                    <span className="underline">C</span>apture
                </span>
            </button>
            <div role="tablist" className="mt-[15px] flex overflow-hidden rounded-[3px]">
                {GRAPH_TABS.map((name) => (
                    <button
                        key={name}
                        type="button"
                        role="tab"
                        aria-selected={tab === name}
                        onClick={() => setTab(name)}
                        className={clsx(
                            "h-[23px] whitespace-nowrap border-r border-[#333] px-2 text-[#d4d4d4]",
                            tab === name ? "bg-[#646464]" : "bg-linear-to-b from-[#545454] to-[#424242]"
                        )}
                    >
                        {name}
                    </button>
                ))}
            </div>
            <div className="flex w-[240px] justify-end pt-2">
                {VIEW_ICONS.map(([label, width, icon]) => (
                    <button
                        key={label}
                        type="button"
                        className={clsx(
                            "flex flex-col items-center gap-[3px] whitespace-nowrap",
                            width,
                            label === "Freq. Axis" ? "text-[#848484]" : "text-[#d8d8d8]"
                        )}
                    >
                        <svg viewBox="0 0 30 20" className="h-5 w-[30px]">
                            {icon}
                        </svg>
                        <span className="leading-4">{label}</span>
                    </button>
                ))}
            </div>
        </div>
    );
}

const LEGEND = [
    { name: "DC200_hor_+ 30", value: "-0,3 %", on: true, line: "bg-[#a05000]", text: "text-[#a05000]" },
    { name: "Windowed", value: "%", on: true, line: "bg-[#dc7400]", text: "text-[#dc7400]" },
    { name: "Window", value: "0,0 %", on: true, line: "bg-[#6490e0]", text: "text-[#6490e0]" },
    { name: "Minimum Phase IR", value: "%", on: true, dim: true, text: "text-[#909090]" },
    { name: "Envelope (ETC)", value: "0,4 %", text: "text-[#c000c0]" },
    { name: "Step Response", value: "%", text: "text-[#008078]" },
];

function Legend() {
    const [on, setOn] = useState(LEGEND.map((l) => Boolean(l.on)));

    return (
        <div className="ml-[136px] mr-[122px] mt-[3px] grid h-10 grid-cols-5 content-start gap-y-px border border-[#585858] bg-[#101010] pl-1.5 pt-0.5">
            {LEGEND.map((item, i) => (
                <div key={item.name} className={clsx("flex h-4 items-center pr-8", item.text)}>
                    <label htmlFor={`trace-${i}`} className="flex w-[154px] items-center gap-[5px] whitespace-nowrap">
                        <CheckBox
                            id={`trace-${i}`}
                            checked={on[i]}
                            dim={item.dim}
                            onChange={() => setOn(on.map((v, j) => (i === j ? !v : v)))}
                        />
                        {item.name}
                    </label>
                    {item.line && <span className={clsx("h-0.5 w-[43px]", item.line)} />}
                    <span className="ml-auto">{item.value}</span>
                </div>
            ))}
        </div>
    );
}

function StatusBar() {
    return (
        <footer className="flex h-5 shrink-0 items-center whitespace-nowrap border-t border-[#383838] text-[#d0d0d0]">
            <span className="w-[69px] border-r border-[#333] pl-[3px]">263/454MB</span>
            <span className="w-[38px] border-r border-[#333] text-center">96 kHz</span>
            <span className="w-[95px] border-r border-[#333] pl-[3px]">Int32L in, Int32L out</span>
            <span className="flex w-[225px] justify-between border-r border-[#333] pl-[3px] pr-1.5 text-[12px] text-[#5a8ce0]">
                <span>0000 0000</span>
                <span>0000 0000</span>
                <span>0000 0000</span>
                <span>0000 0000</span>
            </span>
            <span className="w-[183px] border-r border-[#333] pl-3">Peak input before clipping 147 dB SPL</span>
            <span className="flex-1 text-center">Right click &amp; drag to pan; Ctrl+Right click &amp; drag to measure; mouse wheel to zoom;</span>
            <span className="h-4 w-[171px] border-l border-[#333]" />
        </footer>
    );
}

export default function App() {
    return (
        <div className="flex h-screen flex-col bg-[#1e1e1e] font-['Roboto_Condensed','Roboto',sans-serif] text-[11px] leading-[13px]">
            <TitleBar />
            <Toolbar />
            <div className="flex min-h-0 flex-1">
                <Scrollbar label="Session" top="" thumb="h-[60%]" bottom="" />
                <div className="w-0.5" />
                <MeasurementList />
                <div className="ml-[7px] pb-[673px] pt-[62px]">
                    <Scrollbar label="Measurements" top="flex-[209]" thumb="flex-[41]" bottom="flex-[230]" />
                </div>
                <main className="min-w-0 flex-1">
                    <GraphHeader />
                    <div className="relative">
                        <ImpulsePlot />
                        <div className="absolute left-[35px] top-5 flex h-[34px] w-[19px] flex-col items-center justify-between bg-[#2e2e3c] py-0.5">
                            <button type="button" aria-label="Zoom in vertically">
                                <ZoomGlyph plus />
                            </button>
                            <button type="button" aria-label="Zoom out vertically">
                                <ZoomGlyph />
                            </button>
                        </div>
                        <div className="absolute left-[35px] top-[58px]">
                            <select aria-label="Y axis unit" className="h-[18px] w-[60px] appearance-none rounded-[3px] border border-[#666] bg-[#555] px-1.5 text-[#d8d8d8]">
                                <option>%</option>
                            </select>
                            <Triangle down className="pointer-events-none absolute right-1 top-[7px] text-[#e0e0e0]" />
                        </div>
                        <OptionsPanel />
                        <div className="absolute bottom-[133px] right-5 flex h-[18px] w-10 items-center justify-around bg-[#2e2e3c]">
                            <button type="button" aria-label="Zoom out horizontally">
                                <ZoomGlyph />
                            </button>
                            <button type="button" aria-label="Zoom in horizontally">
                                <ZoomGlyph plus />
                            </button>
                        </div>
                    </div>
                    <MagnitudePlot />
                    <Legend />
                </main>
            </div>
            <StatusBar />
        </div>
    );
}
